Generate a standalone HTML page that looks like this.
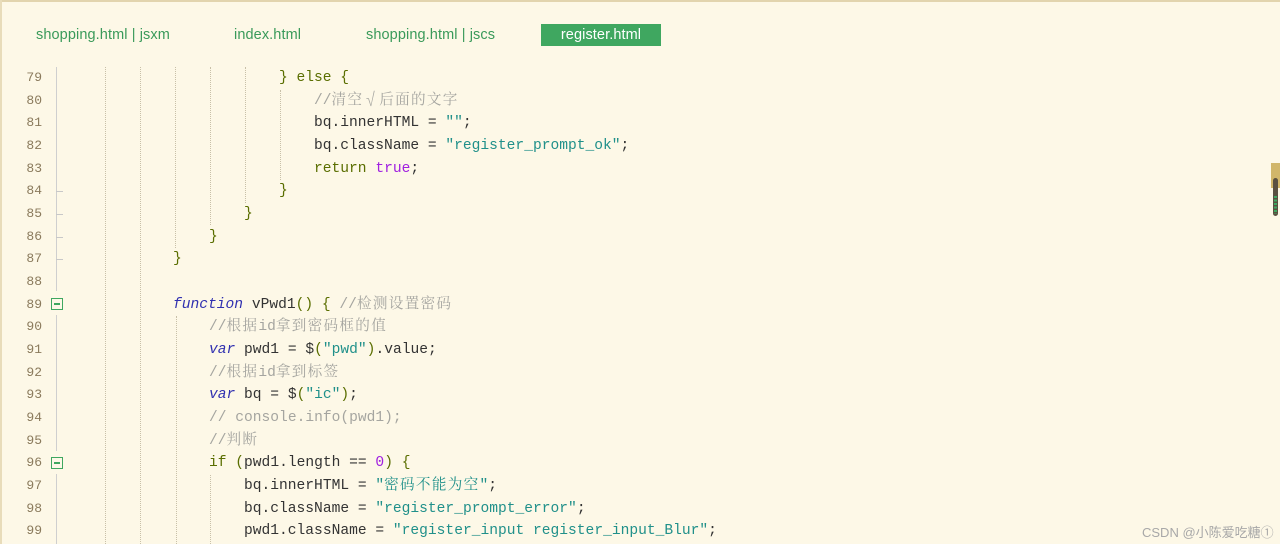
<!DOCTYPE html>
<html><head><meta charset="utf-8"><style>
html,body{margin:0;padding:0;}
body{width:1280px;height:544px;overflow:hidden;background:#fdf8e7;position:relative;font-family:"Liberation Sans","Noto Sans CJK SC",sans-serif;}
.topb{position:absolute;left:0;top:0;width:1280px;height:2px;background:#e2d4ae;}
.leftb{position:absolute;left:0;top:0;width:2px;height:544px;background:#e8dcba;}
.tab{position:absolute;top:24px;height:22px;line-height:22px;font-size:14.5px;color:#3a9a5a;letter-spacing:0.1px;}
.tab.act{background:#3fa760;color:#fff;text-align:center;}
.ln{position:absolute;left:0;width:42px;text-align:right;font-family:"Liberation Mono",monospace;font-size:13px;color:#8a7a5c;height:22px;line-height:22px;}
.code{position:absolute;height:22px;line-height:22px;font-family:"Liberation Mono","Noto Sans CJK SC",monospace;font-size:14.6px;color:#333;white-space:pre;}
.z{font-family:"Noto Serif CJK SC","Noto Sans CJK SC",serif;font-size:14.6px;letter-spacing:1.3px;line-height:0;}
.g{position:absolute;width:0;border-left:1px dotted #c8c0a8;}
.k{color:#3030b0;font-style:italic}
.s{color:#20908a}
.c{color:#a5a5a0}
.p{color:#5a6e00}
.o{color:#a020e0}
.fold{position:absolute;left:51px;width:10px;height:10px;border:1px solid #3fa760;background:#fdf8e7;}
.fold:after{content:"";position:absolute;left:2px;top:4px;width:6px;height:1.5px;background:#3fa760;}
.tick{position:absolute;left:56px;width:7px;height:1px;background:#c8c8c8;}
</style></head><body>
<div class="topb"></div><div class="leftb"></div>
<div class="tab" style="left:36px">shopping.html | jsxm</div>
<div class="tab" style="left:234px">index.html</div>
<div class="tab" style="left:366px">shopping.html | jscs</div>
<div class="tab act" style="left:541px;width:120px">register.html</div>

<div style="position:absolute;left:56px;top:67px;width:1px;height:224px;background:#cfcfcf"></div>
<div style="position:absolute;left:56px;top:315px;width:1px;height:136px;background:#cfcfcf"></div>
<div style="position:absolute;left:56px;top:474px;width:1px;height:70px;background:#cfcfcf"></div>
<div class="fold" style="top:298px"></div>
<div class="fold" style="top:457px"></div>
<div class="tick" style="top:191px"></div>
<div class="tick" style="top:214px"></div>
<div class="tick" style="top:237px"></div>
<div class="tick" style="top:259px"></div>

<div class="g" style="left:105px;top:67px;height:477px"></div>
<div class="g" style="left:140px;top:67px;height:477px"></div>
<div class="g" style="left:175px;top:67px;height:181px"></div>
<div class="g" style="left:176px;top:316px;height:228px"></div>
<div class="g" style="left:210px;top:67px;height:158px"></div>
<div class="g" style="left:210px;top:475px;height:69px"></div>
<div class="g" style="left:245px;top:67px;height:136px"></div>
<div class="g" style="left:280px;top:90px;height:90px"></div>

<div class="ln" style="top:67px">79</div><div class="code" style="top:67px;left:279px"><span class="p">} else {</span></div>
<div class="ln" style="top:90px">80</div><div class="code" style="top:90px;left:314px"><span class="c">//<span class="z">清空√后面的文字</span></span></div>
<div class="ln" style="top:112px">81</div><div class="code" style="top:112px;left:314px">bq.innerHTML = <span class="s">""</span>;</div>
<div class="ln" style="top:135px">82</div><div class="code" style="top:135px;left:314px">bq.className = <span class="s">"register_prompt_ok"</span>;</div>
<div class="ln" style="top:158px">83</div><div class="code" style="top:158px;left:314px"><span class="p">return</span> <span class="o">true</span>;</div>
<div class="ln" style="top:180px">84</div><div class="code" style="top:180px;left:279px"><span class="p">}</span></div>
<div class="ln" style="top:203px">85</div><div class="code" style="top:203px;left:244px"><span class="p">}</span></div>
<div class="ln" style="top:226px">86</div><div class="code" style="top:226px;left:209px"><span class="p">}</span></div>
<div class="ln" style="top:248px">87</div><div class="code" style="top:248px;left:173px"><span class="p">}</span></div>
<div class="ln" style="top:271px">88</div>
<div class="ln" style="top:294px">89</div><div class="code" style="top:294px;left:173px"><span class="k">function</span> vPwd1<span class="p">()</span> <span class="p">{</span> <span class="c">//<span class="z">检测设置密码</span></span></div>
<div class="ln" style="top:316px">90</div><div class="code" style="top:316px;left:209px"><span class="c">//<span class="z">根据</span>id<span class="z">拿到密码框的值</span></span></div>
<div class="ln" style="top:339px">91</div><div class="code" style="top:339px;left:209px"><span class="k">var</span> pwd1 = $<span class="p">(</span><span class="s">"pwd"</span><span class="p">)</span>.value;</div>
<div class="ln" style="top:362px">92</div><div class="code" style="top:362px;left:209px"><span class="c">//<span class="z">根据</span>id<span class="z">拿到标签</span></span></div>
<div class="ln" style="top:384px">93</div><div class="code" style="top:384px;left:209px"><span class="k">var</span> bq = $<span class="p">(</span><span class="s">"ic"</span><span class="p">)</span>;</div>
<div class="ln" style="top:407px">94</div><div class="code" style="top:407px;left:209px"><span class="c">// console.info(pwd1);</span></div>
<div class="ln" style="top:430px">95</div><div class="code" style="top:430px;left:209px"><span class="c">//<span class="z">判断</span></span></div>
<div class="ln" style="top:452px">96</div><div class="code" style="top:452px;left:209px"><span class="p">if</span> <span class="p">(</span>pwd1.length == <span class="o">0</span><span class="p">)</span> <span class="p">{</span></div>
<div class="ln" style="top:475px">97</div><div class="code" style="top:475px;left:244px">bq.innerHTML = <span class="s">"<span class="z">密码不能为空</span>"</span>;</div>
<div class="ln" style="top:498px">98</div><div class="code" style="top:498px;left:244px">bq.className = <span class="s">"register_prompt_error"</span>;</div>
<div class="ln" style="top:520px">99</div><div class="code" style="top:520px;left:244px">pwd1.className = <span class="s">"register_input register_input_Blur"</span>;</div>

<div style="position:absolute;left:1271px;top:163px;width:9px;height:25px;background:#d1b66a"></div>
<div style="position:absolute;left:1273px;top:178px;width:5px;height:38px;background:#5a5040;border-radius:3px"></div>
<div style="position:absolute;left:1274px;top:196px;width:3px;height:18px;background:repeating-linear-gradient(#3fa760 0 2px,#5a5040 2px 3.5px)"></div>
<div style="position:absolute;left:1142px;top:522px;font-size:13px;color:#a8a8a8;">CSDN @小陈爱吃糖①</div>
</body></html>
